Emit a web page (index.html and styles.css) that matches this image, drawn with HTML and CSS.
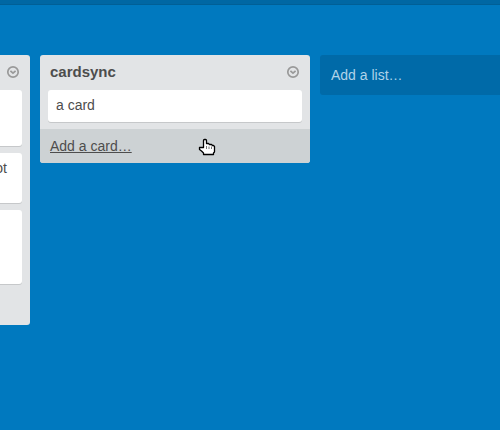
FILE: index.html
```html
<!DOCTYPE html>
<html lang="en">
<head>
<meta charset="utf-8">
<title>Board</title>
<link rel="stylesheet" href="styles.css">
</head>
<body>
<header class="topbar"></header>
<main class="board">
  <section class="list list-clipped">
    <div class="list-header">
      <svg class="menu" viewBox="0 0 12 12"><circle cx="6" cy="6" r="5.2"/><path d="M3.4 4.8L6 7.2L8.6 4.8"/></svg>
    </div>
    <div class="card card-a"></div>
    <div class="card card-b">ot</div>
    <div class="card card-c"></div>
  </section>
  <section class="list list-main">
    <div class="list-header">
      <h2>cardsync</h2>
      <svg class="menu" viewBox="0 0 12 12"><circle cx="6" cy="6" r="5.2"/><path d="M3.4 4.8L6 7.2L8.6 4.8"/></svg>
    </div>
    <div class="card">a card</div>
    <a class="add-card">Add a card…</a>
    <svg class="pointer" viewBox="0 0 18 18">
      <path d="M5.5 9.5V2.5Q5.5 1.5 6.5 1.5H7.5Q8.5 1.5 8.5 2.5V5.5H10.5L11.5 6.5H13.5L14.5 7.5H15.5L16.5 8.5V14L15.5 15V16.5H5.5V15L3.5 13L1.5 11.5V9.5H5.5Z"/>
      <path class="knuckles" d="M8.5 8V11M11 8.5V11M13.5 8.5V11"/>
    </svg>
  </section>
  <section class="add-list">Add a list…</section>
</main>
</body>
</html>
```
FILE: styles.css
```css
* { box-sizing: border-box; }
body {
  margin: 0;
  height: 430px;
  overflow: hidden;
  background: #0079bf;
  color: #4d4d4d;
  font: 14px/18px "Liberation Sans", Arial, sans-serif;
}
.topbar { height: 5px; background: #0067a3; border-bottom: 1px solid #005f96; }
.board { display: flex; align-items: flex-start; gap: 10px; padding-top: 50px; }
.list {
  position: relative;
  flex: none;
  background: #e2e4e6;
  border-radius: 3px;
  overflow: hidden;
}
.list-clipped { width: 30px; height: 270px; border-radius: 0 3px 3px 0; }
.list-main { width: 270px; height: 108px; }
.list-header {
  display: flex;
  align-items: center;
  height: 35px;
  padding: 0 11px 1px 10px;
}
.list-clipped .list-header { padding-left: 0; }
h2 { margin: 0; font-size: 15px; line-height: 18px; }
.menu {
  width: 12px;
  height: 12px;
  margin-left: auto;
  overflow: visible;
  fill: none;
  stroke: #999;
  stroke-width: 1.7;
}
.card {
  height: 32px;
  margin: 0 8px 7px;
  padding: 6px 8px;
  background: #fff;
  border-radius: 3px;
  box-shadow: 0 1px 0 #c6c8ca;
}
.list-clipped .card {
  margin-left: 0;
  padding: 6px 15px 6px 0;
  border-radius: 0 3px 3px 0;
  display: flex;
  justify-content: flex-end;
}
.list-clipped .card-a { height: 56px; }
.list-clipped .card-b { height: 50px; }
.list-clipped .card-c { height: 74px; }
.add-card {
  display: block;
  height: 34px;
  padding: 8px 10px;
  background: #cdd2d4;
  text-decoration: underline;
}
.pointer {
  position: absolute;
  left: 158px;
  top: 83px;
  width: 18px;
  height: 18px;
  fill: #fff;
  stroke: #000;
  stroke-width: 1.3;
  stroke-linejoin: round;
}
.pointer .knuckles { stroke: #555; stroke-width: 0.8; }
.add-list {
  flex: none;
  width: 190px;
  height: 40px;
  padding: 11px;
  background: #006aa8;
  border-radius: 3px;
  color: #b0d3e8;
}
```
